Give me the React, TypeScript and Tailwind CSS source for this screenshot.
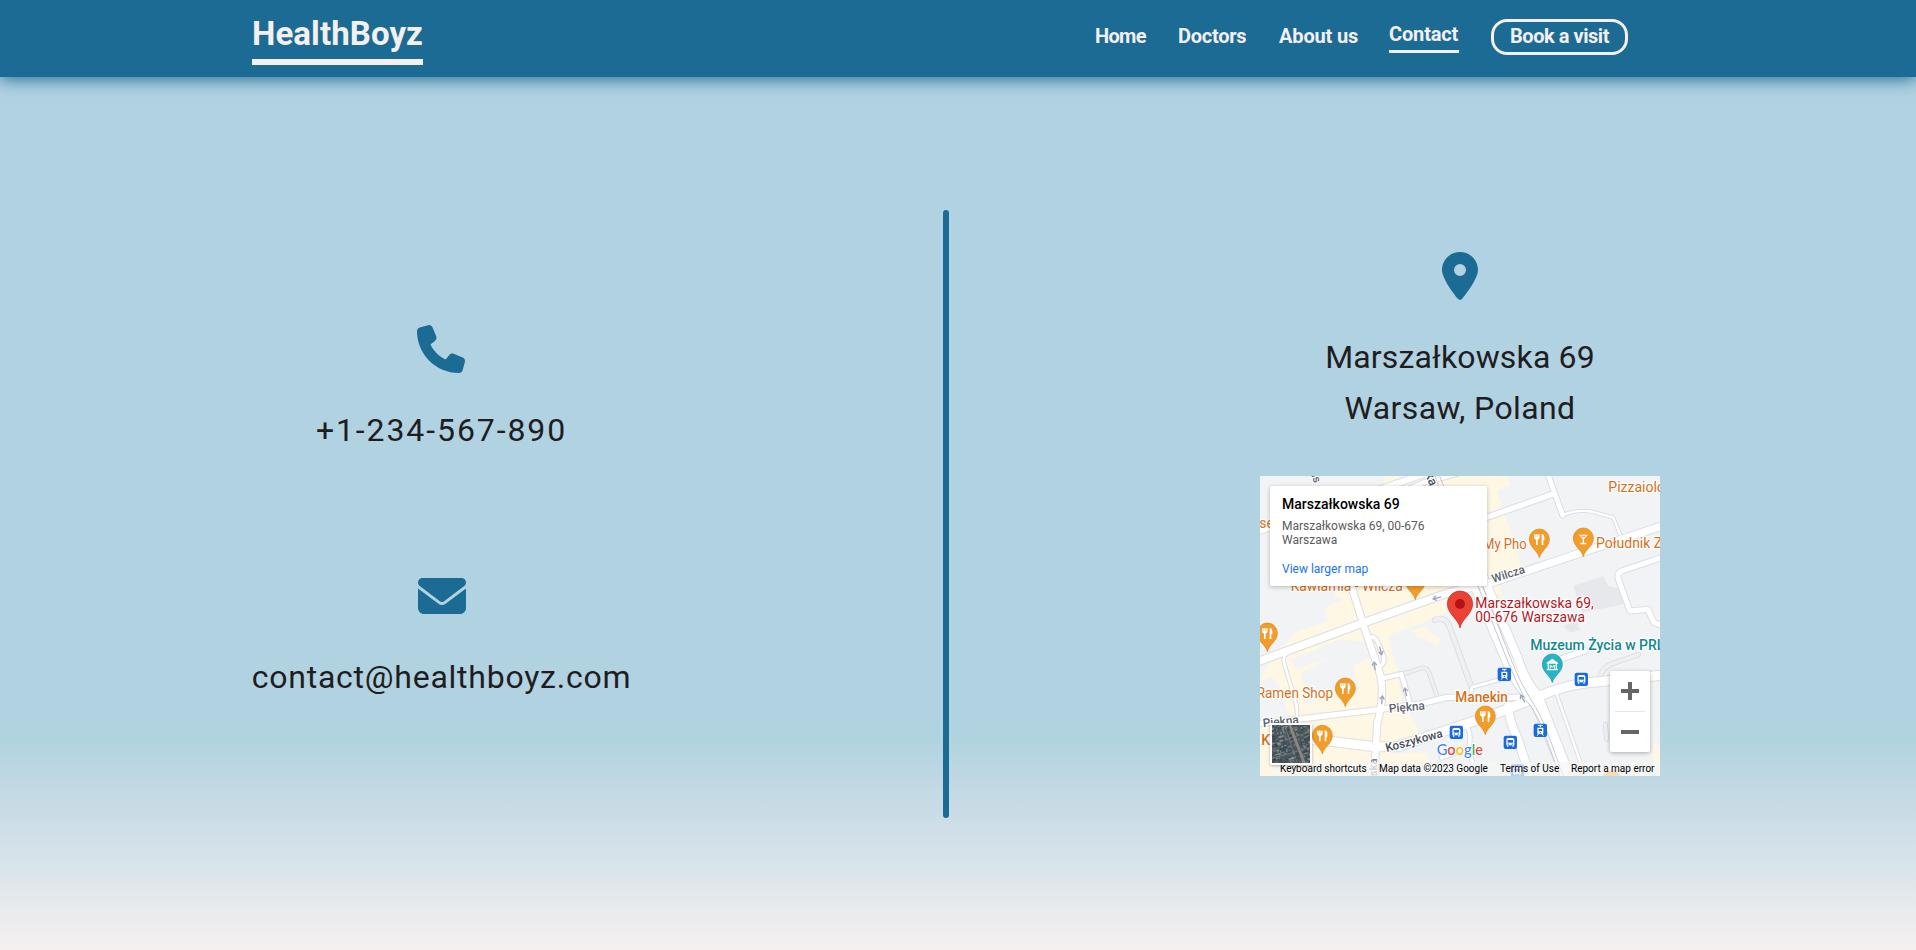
import React from "react";
import { FaEnvelope, FaPhone } from "react-icons/fa6";

type Road = { d: string; w: number };

const roads: Road[] = [
  { d: "M-20 170 L60 145 L560 -30", w: 18 },
  { d: "M400 60 L490 20 L600 -10", w: 14 },
  { d: "M640 138 L880 54", w: 16 },
  { d: "M862 -10 L908 118", w: 14 },
  { d: "M-20 562 L300 444 L560 352 L700 318 L940 238 L1220 145", w: 22 },
  { d: "M1220 240 L1090 283 Q1068 290 1076 312 L1110 405 L1163 400 L1182 440 L1220 452", w: 15 },
  { d: "M262 290 L308 440 L362 600 Q374 660 352 740 L342 910", w: 19 },
  { d: "M330 484 Q346 478 356 505 L372 545 Q374 570 352 574", w: 11 },
  { d: "M365 608 L424 594 L452 690", w: 13 },
  { d: "M-20 745 L180 722 L360 700 L480 684 L560 664 L780 664", w: 16 },
  { d: "M-20 790 L180 792 L345 812 L410 812 L700 716 L840 660 Q900 632 970 622 L1220 596", w: 27 },
  { d: "M635 300 L745 560 Q770 625 830 680 L925 915", w: 32 },
  { d: "M665 290 L775 550 Q795 615 835 660 L930 900", w: 24 },
  { d: "M745 690 Q748 740 772 785 L815 915", w: 24 },
  { d: "M905 548 L975 524", w: 16 },
  { d: "M612 745 Q640 765 625 820 L655 915", w: 10 },
  { d: "M545 845 L610 820", w: 12 },
];

const lanes: Road[] = [
  { d: "M908 118 Q950 98 1000 108 L1060 125 L1080 175", w: 7 },
  { d: "M112 520 Q65 530 72 560 L110 690 L112 730", w: 8 },
  { d: "M885 640 L965 870", w: 7 },
  { d: "M632 660 L635 634 L740 605", w: 9 },
];

const quietLanes: Road[] = [
  { d: "M525 432 Q555 418 570 455 L635 635", w: 14 },
  { d: "M430 594 L485 576 Q500 572 507 590 L532 662", w: 10 },
  { d: "M1018 606 Q1030 570 1060 562 L1135 536", w: 12 },
  { d: "M1036 745 L1040 790", w: 11 },
];

const commercial = [
  "M370 -10 L740 -10 L750 25 L712 45 L790 290 L715 320 L730 370 L690 350 L660 310 L250 330 L0 330 L40 200 L370 80 Z",
  "M130 445 L280 300 L640 320 L545 420 L385 478 L410 580 L430 690 L410 800 L350 900 L0 900 L0 610 L40 540 Z",
  "M440 690 L480 775 L400 790 L350 900 L515 870 L500 830 L350 830 Z",
  "M1178 800 L1200 810 L1200 890 L1178 870 Z",
];

const greyBlocks = [
  "M0 180 L130 145 L150 330 L250 372 L195 395 L205 435 L60 485 L0 535 Z",
  "M95 550 L240 490 L325 500 L345 535 L270 575 L262 530 L105 578 Z",
  "M180 560 L265 525 L300 640 L150 650 Z",
  "M0 620 L35 600 L65 640 L90 730 L0 750 Z",
  "M125 590 L180 560 L200 640 L140 690 Z",
  "M390 500 L460 470 L545 500 L540 425 L640 330 L660 660 L450 650 Z",
];

const buildings = [
  "M940 330 L1030 300 L1045 330 L1090 340 L1090 385 L965 410 Z",
  "M910 450 L950 435 L960 462 L930 470 Z",
];

const foodPins = [
  { x: 838, y: 245 },
  { x: 22, y: 527 },
  { x: 256, y: 692 },
  { x: 187, y: 834 },
  { x: 676, y: 776 },
];

function PinShape({ fill, edge }: { fill: string; edge: string }) {
  return (
    <path
      d="M0 0 C-5 -22 -30 -30 -30 -56 A30 30 0 1 1 30 -56 C30 -30 5 -22 0 0 Z"
      fill={fill}
      stroke={edge}
      strokeWidth="2"
    />
  );
}

function FoodPin({ x, y }: { x: number; y: number }) {
  return (
    <g transform={`translate(${x} ${y})`}>
      <PinShape fill="#f29d2b" edge="#d98518" />
      <path d="M-16 -70 H1 V-62 Q1 -55 -5 -54 V-38 H-10 V-54 Q-16 -55 -16 -62 Z" fill="#fff" />
      <path d="M-11 -70 V-62 M-5 -70 V-62" stroke="#f29d2b" strokeWidth="1.5" />
      <path d="M7 -38 V-71 Q15 -70 15 -60 V-52 H12 V-38 Z" fill="#fff" />
    </g>
  );
}

function BusStop({ x, y, tram }: { x: number; y: number; tram?: boolean }) {
  return (
    <g transform={`translate(${x} ${y})`}>
      <rect x="-20" y="-20" width="40" height="40" rx="6" fill="#1a6be0" />
      {tram ? (
        <>
          <path d="M-7 -15 H7 M0 -15 V-9" stroke="#fff" strokeWidth="3" />
          <path d="M-9 -8 H9 V8 Q9 11 6 11 H-6 Q-9 11 -9 8 Z" fill="#fff" />
          <rect x="-5" y="-4" width="10" height="6" fill="#1a6be0" />
          <rect x="-2" y="5" width="4" height="3" fill="#1a6be0" />
          <path d="M-6 11 L-9 16 M6 11 L9 16" stroke="#fff" strokeWidth="3" />
        </>
      ) : (
        <>
          <path d="M-12 -8 Q-12 -13 -6 -13 H6 Q12 -13 12 -8 V9 H-12 Z" fill="#fff" />
          <rect x="-8" y="-7" width="16" height="8" fill="#1a6be0" />
          <rect x="-8" y="4" width="4" height="3" fill="#1a6be0" />
          <rect x="4" y="4" width="4" height="3" fill="#1a6be0" />
          <path d="M-8 9 V13 M8 9 V13" stroke="#fff" strokeWidth="4" />
        </>
      )}
    </g>
  );
}

type LabelProps = {
  x: number;
  y: number;
  len?: number;
  size?: number;
  color?: string;
  weight?: number;
  rotate?: number;
  children: string;
};

function Label({ x, y, len, size = 42, color = "#d5701a", weight = 400, rotate = 0, children }: LabelProps) {
  return (
    <text
      transform={`translate(${x} ${y}) rotate(${rotate})`}
      textLength={len}
      lengthAdjust="spacingAndGlyphs"
      fontSize={size}
      fontWeight={weight}
      fill={color}
      stroke="#fff"
      strokeWidth="7"
      strokeLinejoin="round"
      paintOrder="stroke"
    >
      {children}
    </text>
  );
}

function Arrow({ x, y, rotate }: { x: number; y: number; rotate: number }) {
  return (
    <path
      transform={`translate(${x} ${y}) rotate(${rotate})`}
      d="M0 13 V-10 M-7 -2 L0 -12 L7 -2"
      fill="none"
      stroke="#9fa6bd"
      strokeWidth="4"
    />
  );
}

function StreetMap() {
  return (
    <svg viewBox="0 0 1200 900" className="block h-full w-full font-['Roboto',sans-serif]">
      <rect width="1200" height="900" fill="#f1f3f4" />
      {commercial.map((d) => (
        <path key={d} d={d} fill="#fef7e3" />
      ))}
      {greyBlocks.map((d) => (
        <path key={d} d={d} fill="#f1f3f4" />
      ))}
      <path d="M455 462 L500 450 L508 470 L540 485 L535 508 L470 480 Z" fill="#fef7e3" />
      {buildings.map((d) => (
        <path key={d} d={d} fill="#e6e8ec" />
      ))}
      <g fill="none" strokeLinecap="round" strokeLinejoin="round">
        {quietLanes.map((r) => (
          <path key={r.d} d={r.d} stroke="#d9dbe0" strokeWidth={r.w + 4} />
        ))}
        {quietLanes.map((r) => (
          <path key={r.d} d={r.d} stroke="#eff0f2" strokeWidth={r.w - 1} />
        ))}
        {[...lanes, ...roads].map((r) => (
          <path key={r.d} d={r.d} stroke="#dcdee3" strokeWidth={r.w + 6} />
        ))}
        {[...lanes, ...roads].map((r) => (
          <path key={r.d} d={r.d} stroke="#fff" strokeWidth={r.w} />
        ))}
        <path d="M520 -10 L650 320 L745 560 Q770 620 795 670 Q830 705 860 790 L905 915" stroke="#c4c8ce" strokeWidth="3" />
        <path d="M535 -10 L668 330 L755 555 Q780 620 815 675 Q840 710 870 790 L915 915" stroke="#c4c8ce" strokeWidth="3" />
      </g>
      <Arrow x={531} y={366} rotate={-105} />
      <Arrow x={362} y={524} rotate={165} />
      <Arrow x={344} y={570} rotate={-8} />
      <Arrow x={366} y={672} rotate={6} />
      <Arrow x={437} y={648} rotate={-12} />
      <Arrow x={788} y={668} rotate={-30} />

      <Label x={150} y={-12} rotate={70} size={34} color="#5b6270" weight={500}>ńs</Label>
      <Label x={488} y={-24} rotate={68} size={38} color="#4a505c" weight={500}>ska</Label>
      <Label x={700} y={321} rotate={-18} size={35} len={102} color="#5b6270" weight={500}>Wilcza</Label>
      <Label x={388} y={710} rotate={-5} size={36} len={108} color="#5b6270" weight={500}>Piękna</Label>
      <Label x={10} y={754} rotate={-6} size={36} len={108} color="#5b6270" weight={500}>Piękna</Label>
      <Label x={380} y={828} rotate={-15} size={36} len={176} color="#454b57" weight={500}>Koszykowa</Label>
      <Label x={351} y={901} rotate={-90} size={34} color="#7b818c" weight={500}>ska</Label>

      <Label x={-2} y={157}>se</Label>
      <Label x={1045} y={48}>Pizzaiolo</Label>
      <Label x={669} y={219} len={131}>My Pho</Label>
      <Label x={1008} y={216}>Południk Zero</Label>
      <Label x={92} y={346} len={336}>Kawiarnia - Wilcza</Label>
      <Label x={-10} y={667} len={229}>Ramen Shop</Label>
      <Label x={4} y={807} weight={500}>Kofi</Label>
      <Label x={586} y={678} len={158} weight={500}>Manekin</Label>
      <Label x={811} y={522} color="#138790" weight={500}>Muzeum Życia w PRL-u</Label>

      <g transform="translate(466 371)">
        <PinShape fill="#f29d2b" edge="#d98518" />
        <path d="M-13 -52 H13 V-43 H-13 Z" fill="#fff" />
      </g>
      {foodPins.map((p) => (
        <FoodPin key={p.x} x={p.x} y={p.y} />
      ))}
      <g transform="translate(970 242)">
        <PinShape fill="#f29d2b" edge="#d98518" />
        <path d="M-14 -66 H14 L2 -53 V-42 H9 V-37 H-9 V-42 H-2 V-53 Z" fill="#fff" />
        <path d="M-6 -61 H6" stroke="#f29d2b" strokeWidth="3" />
      </g>
      <g transform="translate(877 620)">
        <PinShape fill="#26b3c6" edge="#1593a5" />
        <path d="M-17 -60 L0 -72 L17 -60 V-57 H-17 Z M-14 -57 H-10 V-40 H-14 Z M10 -57 H14 V-40 H10 Z M-17 -41 H17 V-37 H-17 Z" fill="#fff" />
        <path d="M-6 -42 V-53 L0 -46 L6 -53 V-42" fill="none" stroke="#fff" strokeWidth="3" />
      </g>

      <BusStop x={733} y={595} tram />
      <BusStop x={964} y={610} />
      <BusStop x={589} y={769} />
      <BusStop x={751} y={799} />
      <BusStop x={841} y={763} tram />
      <BusStop x={772} y={885} />
      <circle cx="1055" cy="912" r="29" fill="#f29d2b" />

      <g transform="translate(600 456)">
        <path d="M0 0 C-4 -26 -38 -42 -38 -73 A38 38 0 1 1 38 -73 C38 -42 4 -26 0 0 Z" fill="#ea4335" stroke="#c5221f" strokeWidth="2" />
        <circle cy="-72" r="15" fill="#b31412" />
      </g>
      <Label x={646} y={396} len={355} color="#b4151b">Marszałkowska 69,</Label>
      <Label x={646} y={438} len={329} color="#b4151b">00-676 Warszawa</Label>

      <text
        x="530"
        y="836"
        textLength="139"
        lengthAdjust="spacingAndGlyphs"
        fontSize="47"
        fontWeight="500"
        stroke="#fff"
        strokeWidth="6"
        paintOrder="stroke"
        className="font-['Lato',sans-serif]"
      >
        <tspan fill="#4285f4">G</tspan>
        <tspan fill="#ea4335">o</tspan>
        <tspan fill="#fbbc04">o</tspan>
        <tspan fill="#4285f4">g</tspan>
        <tspan fill="#34a853">l</tspan>
        <tspan fill="#ea4335">e</tspan>
      </text>
    </svg>
  );
}

const roofColors = ["#4a5862", "#66747a", "#37454a", "#7d8888", "#55625c", "#8a8f92", "#3f4f5c"];

function SatelliteThumb() {
  const cells = [];
  for (let r = 0; r < 30; r++) {
    for (let c = 0; c < 20; c++) {
      const n = (r * 37 + c * 61 + r * c * 13 + ((r * r) % 11) * 5) % 97;
      cells.push(
        <rect key={`${r}-${c}`} x={c * 3 - 12} y={r * 2 - 10} width={1.5 + (n % 3)} height={1 + (n % 2)} fill={roofColors[n % 7]} />
      );
    }
  }
  return (
    <svg viewBox="0 0 38 38" className="block h-full w-full">
      <rect width="38" height="38" fill="#46535a" />
      <g transform="rotate(-18 19 19)">{cells}</g>
      <path d="M17 -2 L33 40" stroke="#8a857d" strokeWidth="3" />
      <path d="M12 -2 L26 40" stroke="#6e7272" strokeWidth="1" />
      <path d="M-2 20 L40 6 M-2 34 L40 22" stroke="#7c817b" strokeWidth="0.8" />
    </svg>
  );
}

function MapEmbed() {
  return (
    <div className="relative h-[300px] w-[400px] overflow-hidden font-['Roboto',sans-serif]">
      <StreetMap />
      <div className="absolute left-[10px] top-[10px] h-[100px] w-[217px] rounded-[2px] bg-white pl-3 pt-[9px] shadow-[0_1px_4px_rgba(0,0,0,0.25)]">
        <p className="text-[14px] font-medium leading-[18px] text-black">Marszałkowska 69</p>
        <p className="mt-[6px] w-[160px] text-[12px] leading-[14px] text-[#5b5b5b]">Marszałkowska 69, 00-676 Warszawa</p>
        <a className="mt-[14px] block text-[12px] leading-[16px] text-[#1a73e8]">View larger map</a>
      </div>
      <div className="absolute right-[10px] top-[195px] flex h-[81px] w-10 flex-col items-center justify-between rounded-[2px] bg-white shadow-[0_1px_4px_rgba(0,0,0,0.3)]">
        <svg viewBox="0 0 40 40" className="h-10 w-10">
          <path d="M18 11 H22 V18 H29 V22 H22 V29 H18 V22 H11 V18 H18 Z" fill="#666" />
        </svg>
        <span className="h-px w-[30px] bg-[#e6e6e6]" />
        <svg viewBox="0 0 40 40" className="h-10 w-10">
          <path d="M11 18 H29 V22 H11 Z" fill="#666" />
        </svg>
      </div>
      <div className="absolute bottom-0 right-0 flex h-[14px] w-[386px] items-center gap-[13px] bg-[#f5f5f5]/70 pl-[6px] text-[10px] leading-[14px] text-black">
        <span className="w-[86px] whitespace-nowrap">Keyboard shortcuts</span>
        <span className="w-[108px] whitespace-nowrap">Map data ©2023 Google</span>
        <span className="w-[58px] whitespace-nowrap">Terms of Use</span>
        <span className="whitespace-nowrap">Report a map error</span>
      </div>
      <div className="absolute left-[10px] top-[247px] h-[42px] w-[42px] rounded-[2px] border-2 border-white shadow-[0_1px_3px_rgba(0,0,0,0.3)]">
        <SatelliteThumb />
      </div>
    </div>
  );
}

const links = [
  { label: "Home", cls: "w-[51px] tracking-[-0.7px]" },
  { label: "Doctors", cls: "w-[69px] tracking-[-0.25px]" },
  { label: "About us", cls: "w-[78px] tracking-[-0.15px]" },
];

function Header() {
  return (
    <header className="z-10 h-[77px] shrink-0 bg-[#1c6b94] text-[#f5f0f0] shadow-[0_2px_16px_#1c6b94]">
      <div className="mx-auto flex h-full w-[1408px] -translate-x-[2px] justify-between pr-8">
        <a className="mt-[13px] flex h-[52px] w-[171px] flex-col justify-between whitespace-nowrap border-b-[6px] border-[#f5f0f0] text-[33px] font-bold leading-[41px] tracking-[0.1px]">
          HealthBoyz
        </a>
        <nav className="flex gap-8 whitespace-nowrap text-[20px] font-bold leading-[30px]">
          {links.map((l) => (
            <a key={l.label} className={`${l.cls} mt-[21px]`}>
              {l.label}
            </a>
          ))}
          <a className="mt-[19px] h-[34px] w-[70px] border-b-[3px] border-[#f5f0f0] tracking-[-0.15px]">Contact</a>
          <a className="mt-[19px] h-9 w-[137px] rounded-2xl border-[3px] border-[#f5f0f0] text-center leading-[28px] tracking-[-0.45px]">
            Book a visit
          </a>
        </nav>
      </div>
    </header>
  );
}

export default function App() {
  return (
    <div className="flex h-[950px] w-full flex-col overflow-hidden bg-[linear-gradient(180deg,#b1d2e2_0px,#b1d2e1_718px,#b0d4df_740px,#c2d9e4_787px,#d5e2ea_853px,#f5f0f0_950px)] font-['Roboto',sans-serif]">
      <Header />
      <main className="mx-auto flex h-[873px] w-[1408px] -translate-x-[2px] items-center justify-between pt-px text-[32px] leading-[51.2px] text-[#1f1d1e]">
        <section className="flex w-[379px] flex-col items-center gap-[115.6px] whitespace-nowrap">
          <div className="flex flex-col items-center gap-8">
            <FaPhone className="h-12 w-12 text-[#1c6b94]" />
            <p className="tracking-[1.9px]">+1-234-567-890</p>
          </div>
          <div className="flex flex-col items-center gap-8">
            <FaEnvelope className="h-12 w-12 text-[#1c6b94]" />
            <p className="tracking-[0.75px]">contact@healthboyz.com</p>
          </div>
        </section>
        <div className="h-[608px] w-[6px] rounded-full bg-[#1c6b94]" />
        <section className="flex flex-col items-center">
          <svg viewBox="0 0 384 512" className="h-12 w-9 text-[#1c6b94]">
            <path
              fill="currentColor"
              fillRule="evenodd"
              d="M215.7 499.2C267 435 384 279.4 384 192C384 86 298 0 192 0S0 86 0 192c0 87.4 117 243 168.300 307.200c12.300 15.300 35.100 15.300 47.400 0zM192 128a64 64 0 1 1 0 128a64 64 0 1 1 0-128z"
            />
          </svg>
          <div className="mb-[42px] mt-8 flex flex-col items-center whitespace-nowrap">
            <p className="tracking-[0.15px]">Marszałkowska 69</p>
            <p className="tracking-[0.4px]">Warsaw, Poland</p>
          </div>
          <MapEmbed />
        </section>
      </main>
    </div>
  );
}
